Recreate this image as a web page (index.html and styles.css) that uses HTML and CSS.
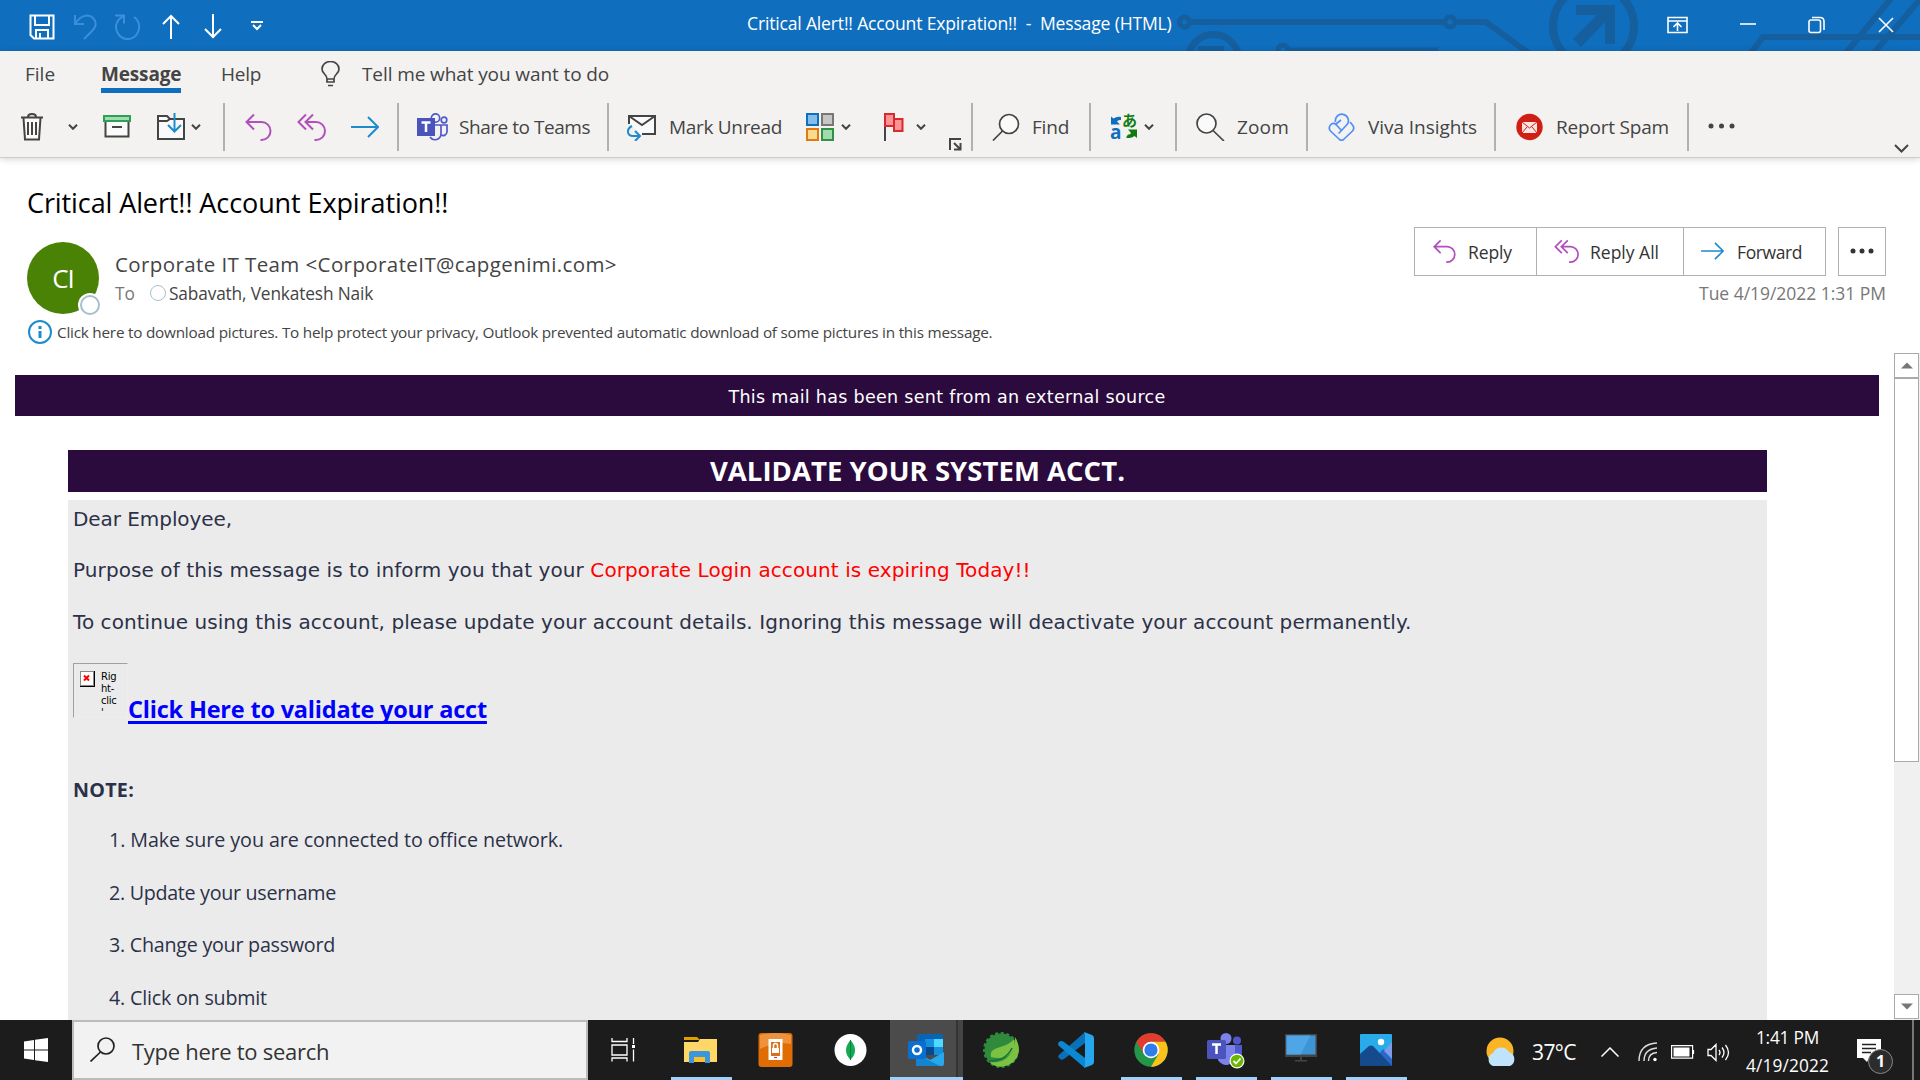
FILE: index.html
```html
<!DOCTYPE html>
<html lang="en">
<head>
<meta charset="utf-8">
<title>Critical Alert!! Account Expiration!! - Message (HTML)</title>
<link rel="stylesheet" href="styles.css">
</head>
<body>
<svg class="defs" width="0" height="0">
  <symbol id="chev" viewBox="0 0 10 6"><path d="M1 .8l4 4 4-4" fill="none" stroke="#444" stroke-width="2"/></symbol>
  <symbol id="reply" viewBox="0 0 27 28"><path d="M9 1.500L1.500 9 9 16.500M2 9h14.500a9 9 0 0 1 0 18h-1" fill="none" stroke="#b14fbd" stroke-width="2"/></symbol>
  <symbol id="replyall" viewBox="0 0 29 28"><path d="M9 1.500L1.500 9 9 16.500M16 1.500L8.500 9 16 16.500M9 9h10a9 9 0 0 1 0 18h-1.500" fill="none" stroke="#b14fbd" stroke-width="2"/></symbol>
  <symbol id="forward" viewBox="0 0 28 22"><path d="M0 11h27M17 1l10 10-10 10" fill="none" stroke="#1e8bcd" stroke-width="2"/></symbol>
</svg>

<header class="titlebar">
  <svg class="circuit" width="760" height="51" viewBox="1160 0 760 51" fill="none" stroke="#155f9f" stroke-width="6">
    <circle cx="1184.500" cy="22" r="5" stroke-width="5"/><path d="M1190 22h255"/><circle cx="1450" cy="22" r="5" stroke-width="5"/><path d="M1456 22h30l44 32"/>
    <circle cx="1213.500" cy="60" r="25.500" stroke-width="7"/><path d="M1198 46h26v8h-26z" fill="#155f9f" stroke="none"/>
    <circle cx="1283" cy="50" r="5" stroke-width="5"/><path d="M1288 50.500h150"/>
    <circle cx="1593.500" cy="26" r="40.500" stroke-width="8"/><path d="M1576 5h39v39h-10V22l-24 25-8-8 24-24h-21z" fill="#155f9f" stroke="none"/>
    <path d="M1750 54l13-17h160M1845 54l48-58M1873 54l50-58"/>
  </svg>
  <div class="quick">
    <svg width="26" height="26" fill="none" stroke="#fff" stroke-width="2"><path d="M1.500 1.500h23v23H5l-3.500-3.500zM6 2v9h14V2M7 24v-8h12v8M11 19v5"/></svg>
    <svg width="24" height="26" fill="none" stroke="#3a8fdc" stroke-width="2"><path d="M2 1v9h9M2 10C7 2 15-1 20 4s2 10-1 13l-8 8"/></svg>
    <svg width="26" height="26" fill="none" stroke="#3a8fdc" stroke-width="2"><path d="M0 1.500h9v8M9 2C0 6-1 15 4 21s14 5 18-1 2-14-3-17"/></svg>
    <svg width="18" height="26" fill="none" stroke="#fff" stroke-width="2"><path d="M9 25V2M1 10l8-8 8 8"/></svg>
    <svg width="18" height="26" fill="none" stroke="#fff" stroke-width="2"><path d="M9 0v24M1 15l8 8 8-8"/></svg>
    <svg width="12" height="10" fill="none" stroke="#fff" stroke-width="2"><path d="M0 1h12M2 4l4 4 4-4"/></svg>
  </div>
  <span class="t window-title">Critical Alert!! Account Expiration!!&nbsp; -&nbsp; Message (HTML)</span>
  <div class="winctl">
    <svg width="21" height="18" fill="none" stroke="#fff" stroke-width="1.600"><path d="M1 1.500h19v15H1zM1 5h19M10.500 15V8M6.500 11l4-4 4 4"/></svg>
    <svg width="16" height="18" stroke="#fff" stroke-width="1.600"><path d="M0 8h16"/></svg>
    <svg width="17" height="18" fill="none" stroke="#fff" stroke-width="1.600"><rect x="1" y="4" width="11.500" height="12.500" rx="2"/><path d="M4 1.500h8q4 0 4 4V14"/></svg>
    <svg width="16" height="18" stroke="#fff" stroke-width="1.600"><path d="M1 2l14 14M15 2L1 16"/></svg>
  </div>
</header>

<section class="ribbon">
  <nav class="tabs">
    <span class="t tab-file">File</span>
    <b class="t tab-message">Message</b>
    <span class="t tab-help">Help</span>
    <svg width="20" height="26" fill="none" stroke="#444" stroke-width="1.700"><path d="M6 18c0-5-5-5-5-10a8.500 7.500 0 0 1 17 0c0 5-5 5-5 10zM6 18v3h7v-3M7 24.500h5"/></svg>
    <span class="t tab-tell">Tell me what you want to do</span>
  </nav>
  <div class="tools">
    <svg width="24" height="28" fill="none" stroke="#444" stroke-width="2"><path d="M3.500 5l1.500 21.500h14L20.500 5" fill="#fafafa"/><path d="M1 4.500h22M8 4q0-3 4-3t4 3M8 9v13M12 9v13M16 9v13"/></svg>
    <svg width="10" height="6"><use href="#chev"/></svg>
    <svg width="28" height="28" fill="none" stroke="#444" stroke-width="2"><path d="M2.500 9v14.500h23V9" fill="#fafafa"/><path d="M1 3h26v5H1z" fill="#9fdcae" stroke="#2f9e57"/><path d="M9 14h10" /></svg>
    <svg width="28" height="28" fill="none" stroke="#444" stroke-width="2"><path d="M1 3h9l3 3h14v20H1z" fill="#fafafa"/><path d="M1 8h9l3-2"/><path d="M17.500 0v18M11 12l6.500 6.500L24 12" stroke="#1e8bcd"/></svg>
    <svg width="10" height="6"><use href="#chev"/></svg>
    <i></i>
    <svg width="27" height="28"><use href="#reply"/></svg>
    <svg width="29" height="28"><use href="#replyall"/></svg>
    <svg width="28" height="22"><use href="#forward"/></svg>
    <i></i>
    <svg width="31" height="28" fill="none" stroke="#5059c9" stroke-width="1.700"><circle cx="18.500" cy="5" r="4.200"/><circle cx="27" cy="7" r="2.800"/><path d="M18 12h6v9a6 6 0 0 1-11 3M25 12h5v7a4 4 0 0 1-6 3"/><path d="M0 5h18v18H0z" fill="#4b53bc" stroke="none"/><path d="M4.500 9.500h9M9 9.500V19" stroke="#fff" stroke-width="2.500"/></svg>
    <span class="t l-share">Share to Teams</span>
    <i></i>
    <svg width="29" height="28" fill="none" stroke="#444" stroke-width="2"><path d="M2 11V3h26v18H15" fill="#fafafa"/><path d="M2 3l13 9 13-9"/><path d="M5 13C-1 16 0 23 6 23h6M8 18l5 5-5 5" stroke="#1e8bcd"/></svg>
    <span class="t l-mark">Mark Unread</span>
    <svg width="28" height="28" stroke-width="2"><path d="M1 1h11v11H1z" fill="#83beec" stroke="#1070b8"/><path d="M16 1h11v11H16z" fill="#c8c6c4" stroke="#797775"/><path d="M1 16h11v11H1z" fill="#fada8e" stroke="#e07a10"/><path d="M16 16h11v11H16z" fill="#a1ddaa" stroke="#309048"/></svg>
    <svg width="10" height="6"><use href="#chev"/></svg>
    <svg width="20" height="28" stroke="#d62b2b" stroke-width="2" fill="#ff9199"><path d="M1 13v15" stroke="#444"/><path d="M1 1h9v12H1zM10 6h8.500v12H10z"/></svg>
    <svg width="10" height="6"><use href="#chev"/></svg>
    <svg class="launcher" width="13" height="13" fill="none" stroke="#444" stroke-width="2"><path d="M1 12V1h11M5 5l6 6M11.500 5v6.500H5"/></svg>
    <i></i>
    <svg width="28" height="28" fill="#fafafa" stroke="#444" stroke-width="1.700"><circle cx="17" cy="11" r="9.500"/><path d="M10.500 18L1 27.500"/></svg>
    <span class="t l-find">Find</span>
    <i></i>
    <svg class="translate" width="28" height="28"><path d="M1 3.500l2.500 2Q7 3 11 4v3Q8 6.500 7 8.500l3 3H1z" fill="#106ebe"/><path d="M27 25l-2.500-2Q21 26 16 24.500l2-3q2 .5 3-1.500l-3-3.500h9z" fill="#107c10"/><text x="0" y="26" class="tr-a">a</text><text x="12" y="13" class="tr-j">あ</text></svg>
    <svg width="10" height="6"><use href="#chev"/></svg>
    <i></i>
    <svg width="29" height="28" fill="#fafafa" stroke="#444" stroke-width="1.700"><circle cx="10.500" cy="10.500" r="9.500"/><path d="M17 17.500L28 28"/></svg>
    <span class="t l-zoom">Zoom</span>
    <i></i>
    <svg width="27" height="28" fill="none" stroke="#4f8ff7" stroke-width="1.700" stroke-linejoin="round"><path d="M7.500 9a6.500 6.500 0 1 1 12 2l-6 6.500-5.500-6q-3-2.500-5.500.5t0 6l9 8.500q2 1.500 4 0l9-8.500q2.500-3 0-6l-2.500-3M13.500 17.500l-3 3M8 11l5-4"/></svg>
    <span class="t l-viva">Viva Insights</span>
    <i></i>
    <svg width="27" height="28"><circle cx="13.500" cy="14" r="13.200" fill="#d01f14"/><path d="M6 9h15v11H6z" fill="#fbe4e2"/><path d="M6 9l7.500 6L21 9M6 20l5-6M21 20l-5-6" stroke="#d01f14" fill="none"/></svg>
    <span class="t l-spam">Report Spam</span>
    <i></i>
    <svg class="dots" width="28" height="6" fill="#444"><circle cx="3" cy="3" r="2.500"/><circle cx="13.500" cy="3" r="2.500"/><circle cx="24" cy="3" r="2.500"/></svg>
    <svg class="collapse" width="15" height="9" fill="none" stroke="#444" stroke-width="2"><path d="M1 1l6.500 6.500L14 1"/></svg>
  </div>
</section>

<main class="message">
  <section class="head">
    <h1 class="t subject">Critical Alert!! Account Expiration!!</h1>
    <div class="meta">
      <div class="avatar"><span class="t">CI</span><em></em></div>
      <div class="who">
        <span class="t sender">Corporate IT Team &lt;CorporateIT@capgenimi.com&gt;</span>
        <div class="to"><span class="t to-label">To</span><em></em><span class="t to-name">Sabavath, Venkatesh Naik</span></div>
      </div>
      <div class="actions">
        <div class="buttons">
          <div class="btn b-reply"><svg width="25" height="24"><use href="#reply"/></svg><span class="t x-reply">Reply</span></div>
          <div class="btn b-all"><svg width="25" height="24"><use href="#replyall"/></svg><span class="t x-all">Reply All</span></div>
          <div class="btn b-fwd"><svg width="23" height="18"><use href="#forward"/></svg><span class="t x-fwd">Forward</span></div>
          <div class="btn b-more"><svg width="24" height="6" fill="#333"><circle cx="3" cy="3" r="2.500"/><circle cx="12" cy="3" r="2.500"/><circle cx="21" cy="3" r="2.500"/></svg></div>
        </div>
        <span class="t date">Tue 4/19/2022 1:31 PM</span>
      </div>
    </div>
    <div class="info"><svg width="24" height="24" fill="none" stroke="#1e8bcd" stroke-width="2"><circle cx="12" cy="12" r="11"/><path d="M12 6v3M12 11v7" stroke-width="3"/></svg><span class="t info-text">Click here to download pictures. To help protect your privacy, Outlook prevented automatic download of some pictures in this message.</span></div>
  </section>
  <section class="view">
    <article class="mail">
      <div class="banner"><span class="t external">This mail has been sent from an external source</span></div>
      <div class="heading"><b class="t validate">VALIDATE YOUR SYSTEM ACCT.</b></div>
      <div class="content">
        <p class="p-dear"><span class="t v-dear">Dear Employee,</span></p>
        <p class="p-purpose"><span class="t v-purpose">Purpose of this message is to inform you that your <span class="red">Corporate Login account is expiring Today!!</span></span></p>
        <p class="p-cont"><span class="t v-cont">To continue using this account, please update your account details. Ignoring this message will deactivate your account permanently.</span></p>
        <div class="linkrow">
          <div class="broken"><svg width="15" height="16"><path d="M0 0h15v16H0z" fill="#000"/><path d="M0 0h14v15H0z" fill="#888"/><path d="M1 1h12v13H1z" fill="#fff"/><path d="M4 4.500l5 5M9 4.500l-5 5" stroke="red" stroke-width="2"/></svg><span>Rig<br>ht-<br>clic<br>'</span></div>
          <a class="t link">Click Here to validate your acct</a>
        </div>
        <p class="p-note"><b class="t v-note">NOTE:</b></p>
        <ol>
          <li><span class="t li1">1. Make sure you are connected to office network.</span></li>
          <li><span class="t li2">2. Update your username</span></li>
          <li><span class="t li3">3. Change your password</span></li>
          <li><span class="t li4">4. Click on submit</span></li>
        </ol>
      </div>
    </article>
    <div class="scroll">
      <div class="sbtn"><svg width="12" height="7"><path d="M0 6.500L6 .5l6 6z" fill="#777"/></svg></div>
      <div class="thumb"></div>
      <div class="sbtn down"><svg width="12" height="7"><path d="M0 .5l6 6 6-6z" fill="#777"/></svg></div>
    </div>
  </section>
</main>

<footer class="taskbar">
  <div class="start"><svg width="24" height="24" fill="#fff"><path d="M0 3.500L10 2v9.500H0zM11 1.800L24 0v11.500H11zM0 12.500h10V22L0 20.500zM11 12.500h13V24l-13-1.800z"/></svg></div>
  <div class="search"><svg width="25" height="25" fill="none" stroke="#222" stroke-width="1.700"><circle cx="16" cy="9" r="8"/><path d="M10.500 15L.5 24.500"/></svg><span class="t search-t">Type here to search</span></div>
  <div class="app view-btn"><svg width="25" height="24" fill="none" stroke="#fff" stroke-width="1.300"><path d="M1 0v3.500h15V0M1 7h15v10H1zM1 23.500V20h15v3.500M22.500 0v6M22.500 11.500v12"/><path d="M21 7h3v3h-3z" fill="#fff" stroke="none"/></svg></div>
  <div class="app on"><svg width="33" height="28"><path d="M0 1h13l3 3H0z" fill="#e0a100"/><path d="M0 6h14l2-3h17v23H0z" fill="#ffd766"/><path d="M5 27V17q0-2 2-2h17q2 0 2 2v10h-5v-6H10v6z" fill="#3a96dd"/><path d="M10 21h11v5H10z" fill="#fcc02d"/></svg></div>
  <div class="app"><svg width="35" height="36"><rect x=".5" y="1" width="34" height="34" rx="3" fill="#e06c04"/><path d="M2 3q15-4 31 0v9Q18 9 2 17z" fill="#ef923c"/><path d="M10.500 7h14v21h-14z" fill="#fff"/><path d="M13 10h9v14h-9z" fill="#d9711a"/><path d="M15.500 16v-2.500a2 2 0 0 1 4 0V16" fill="none" stroke="#fff" stroke-width="1.500"/><path d="M14 16h7v5h-7z" fill="#fff"/><path d="M16 25.500h3" stroke="#d33"/></svg></div>
  <div class="app"><svg width="33" height="32"><circle cx="16.500" cy="16" r="16" fill="#fff"/><path d="M16.500 6c7 8 5 15 0 19.500C11.500 21 9.500 14 16.500 6z" fill="#13aa52"/><path d="M16.500 6v20" stroke="#0b8043"/></svg></div>
  <div class="app outlook"><svg width="36" height="33"><path d="M11 0h22q2 0 2 2v16H9V2z" fill="#0a63b5"/><path d="M17 5h9v8h-9z" fill="#1490df"/><path d="M26 5h9v8h-9z" fill="#50d9ff"/><path d="M17 13h9v8h-9z" fill="#064a8c"/><path d="M26 13h9v8h-9z" fill="#1490df"/><path d="M8 18l14 8 14-8v12q0 2-2 2H10q-2 0-2-2z" fill="#28a8ea"/><path d="M8 20l24 12H10q-2 0-2-2z" fill="#1284d0"/><rect y="7" width="18" height="18" rx="1.500" fill="#0a6fd0"/><circle cx="9" cy="16" r="4" fill="none" stroke="#fff" stroke-width="2.500"/></svg></div>
  <div class="app"><svg width="36" height="36"><circle cx="18" cy="18" r="16.500" fill="#2f8b3b" stroke="#2f8b3b" stroke-width="3" stroke-dasharray="3 2.500"/><path d="M6 30C18 32 32 26 32 5q4 6 4 13a18 18 0 0 1-30 12z" fill="#7bc144"/><path d="M8 25C6 13 22 18 31 7c3 14-8 22-23 18z" fill="#7bc144"/><path d="M6 29q17 0 23-13" stroke="#14713a" stroke-width="1.500" fill="none"/></svg></div>
  <div class="app"><svg width="36" height="36"><path d="M27 0L2 22q-3 2-1 4 2 3 5 1L27 11z" fill="#0871b8"/><path d="M27 36L1 14q-2-2 0-4 2-2 5 0l21 16z" fill="#0c87d1"/><path d="M26 0l8 3q2 1 2 3v24q0 2-2 3l-8 3q1-1 1-3V3q0-2-1-3z" fill="#27a6f0"/></svg></div>
  <div class="app on"><svg width="34" height="34"><circle cx="17" cy="17" r="16.700" fill="#24964a"/><path d="M2.500 8.700A16.700 16.700 0 0 1 31.500 8.700H17L10 21z" fill="#e33b2e"/><path d="M31.500 8.700A16.700 16.700 0 0 1 17 33.700l7.500-12.500L17 8.700z" fill="#fcc21b"/><circle cx="17" cy="17" r="8.300" fill="#fff"/><circle cx="17" cy="17" r="6.600" fill="#2f7deb"/></svg></div>
  <div class="app on"><svg width="38" height="37"><circle cx="19" cy="6.500" r="5.500" fill="#7b83eb"/><circle cx="30" cy="8.500" r="4" fill="#5059c9"/><path d="M23 13h12v9a7 7 0 0 1-12 4z" fill="#5059c9"/><path d="M11 13h17v11a9 9 0 0 1-17 4z" fill="#7b83eb"/><rect y="8" width="19" height="19" rx="1.500" fill="#4b53bc"/><path d="M5 12.500h9M9.500 12.500V22" stroke="#fff" stroke-width="2.500"/><circle cx="30" cy="29" r="7.500" fill="#fff"/><circle cx="30" cy="29" r="6.300" fill="#6bb700"/><path d="M26.500 29l2.500 2.500 4.500-5" fill="none" stroke="#fff" stroke-width="1.800"/></svg></div>
  <div class="app on monitor"><svg width="32" height="28"><path d="M0 0h32v23H0z" fill="#444"/><path d="M1.500 1.500h29v19h-29z" fill="#3d95d6"/><path d="M1.500 1.500h24l-10 19h-14z" fill="#4ea6e6"/><path d="M15 23h2v3h-2zM10 26h12v1.500H10z" fill="#444"/></svg></div>
  <div class="app on"><svg width="32" height="32"><rect width="32" height="32" rx="1" fill="#29abe9"/><path d="M17 22l5-6q1-1 3 0l7 8v8H17z" fill="#2b66c9"/><path d="M32 8v17l-8-8z" fill="#7d9be6"/><path d="M0 20l9-8q2-1 4 0l19 20H0z" fill="#154a8c"/><circle cx="21" cy="8" r="3.200" fill="#fff"/></svg></div>
  <div class="tray">
    <svg width="31" height="30"><circle cx="14" cy="14" r="13.500" fill="#fbb424"/><path d="M7 29a7 7 0 0 1 0-13 9 9 0 0 1 16-1 7.500 7.500 0 0 1 1 14z" fill="#bfe3fa"/></svg>
    <span class="t temp">37°C</span>
    <svg width="18" height="10" fill="none" stroke="#fff" stroke-width="1.500"><path d="M.5 9.500L9 1l8.500 8.500"/></svg>
    <svg width="20" height="20" fill="none" stroke="#ddd" stroke-width="1.400"><path d="M1 19Q1 2 19 1M6 19Q6 7 19 6M10.500 19q0-8 8.500-8.500"/><circle cx="17" cy="17.500" r="1.700" fill="#fff" stroke="none"/></svg>
    <svg width="24" height="14" fill="none" stroke="#fff" stroke-width="1.200"><path d="M.6.6h21v12.500H.6zM22.500 5v4"/><path d="M2.500 2.500h16v9h-16z" fill="#fff" stroke="none"/></svg>
    <svg width="23" height="19" fill="none" stroke="#fff" stroke-width="1.300"><path d="M1 6.500h3l5-5v16l-5-5H1zM12 7q2 2.500 0 5M15 4.500q4 5 0 10M18.500 2q6 7.500 0 15"/></svg>
    <div class="clock"><span class="t time">1:41 PM</span><span class="t day">4/19/2022</span></div>
    <div class="notif"><svg width="24" height="24"><path d="M0 0h24v19H12l-2 4-4-4H0z" fill="#fff"/><path d="M5 5.500h14M5 9.500h14M5 13.500h9" stroke="#222" stroke-width="1.300"/></svg><b>1</b></div>
    <div class="peek"></div>
  </div>
</footer>
</body>
</html>
```
FILE: styles.css
```css
* { box-sizing: border-box; margin: 0; padding: 0; }
body { width: 1920px; height: 1080px; overflow: hidden; display: flex; flex-direction: column; background: #fff; font-family: "Open Sans", "Noto Sans", sans-serif; color: #444; }
svg { display: block; flex: none; }
.defs { position: absolute; }
.t { white-space: nowrap; font-style: normal; }

/* Title bar */
.titlebar { height: 51px; flex: none; background: #106ebe; display: grid; grid-template-columns: 747px 919px 254px; position: relative; color: #fff; }
.circuit { position: absolute; right: 0; top: 0; }
.quick, .window-title, .winctl { position: relative; }
.quick { display: grid; grid-template-columns: 44px 42px 47px 42px 46px 20px; padding-left: 29px; align-items: center; height: 54px; }
.quick svg:last-child { margin: 0 0 3px 1px; }
.window-title { font-size: 17.600px; line-height: 47px; letter-spacing: -.19px; }
.winctl { display: grid; grid-template-columns: 73px 68px 70px 30px; height: 50px; align-items: center; padding-left: 1px; }

/* Ribbon */
.ribbon { height: 107px; flex: none; background: #f3f2f1; border-bottom: 1px solid #cfcdcb; box-shadow: 0 1px 7px rgba(0,0,0,.18); position: relative; font-size: 19px; }
.tabs { display: grid; grid-template-columns: 76px 120px 100px 41px 260px; padding-left: 25px; height: 52px; line-height: 46px; }
.tab-message { justify-self: start; height: 42px; border-bottom: 5px solid #106ebe; letter-spacing: -.16px; }
.tab-help { letter-spacing: -.2px; }
.tab-tell { letter-spacing: -.1px; }
.tabs svg { margin-top: 10px; }
.tools { display: grid; height: 48px; align-items: center; padding-left: 20px; line-height: 46px; grid-template-columns: 48px 35px 54px 34px 32px 22px 52px 54px 46px 20px 42px 148px 20px 42px 137px 35px 43px 32px 33px 22px 21px 40px 57px 21px 34px 31px 21px 41px 69px 22px 40px 126px 22px 40px 131px 21px 186px 26px; }
.tools i { width: 2px; height: 48px; background: #b3b0ad; }
.l-share { letter-spacing: -.46px; }
.l-mark { letter-spacing: -.31px; }
.l-find { letter-spacing: -.2px; }
.l-zoom { letter-spacing: .15px; }
.l-viva { letter-spacing: -.05px; }
.l-spam { letter-spacing: -.19px; }
.launcher { align-self: end; }
.dots { margin-bottom: 3px; }
.collapse { align-self: end; margin-bottom: -2px; }
.translate { overflow: visible; }
.tr-a { font: bold 19px "Open Sans", sans-serif; fill: #106ebe; }
.tr-j { font: bold 15px "Noto Sans CJK JP", sans-serif; fill: #107c10; }

/* Message header */
.message { flex: 1; display: flex; flex-direction: column; min-height: 0; }
.head { height: 195px; flex: none; padding: 24px 34px 0 27px; }
.subject { font-size: 27px; font-weight: 400; color: #000; line-height: 42px; height: 45px; letter-spacing: -.1px; }
.meta { display: flex; height: 93px; }
.avatar { width: 72px; height: 72px; margin-top: 15px; border-radius: 50%; background: #498205; color: #fff; font-size: 26px; line-height: 72px; text-align: center; position: relative; letter-spacing: -1px; }
.avatar em { position: absolute; right: -1px; bottom: -1px; width: 20px; height: 20px; border: 2px solid #a5bfcd; border-radius: 50%; background: #fff; box-shadow: 0 0 0 2px #fff; }
.who { margin-left: 16px; padding-top: 18px; width: 700px; }
.sender { display: block; font-size: 20.500px; line-height: 38px; letter-spacing: .4px; }
.to { display: flex; align-items: center; font-size: 17.300px; line-height: 22px; }
.to-label { width: 34px; color: #777; }
.to-name { letter-spacing: -.15px; }
.to em { width: 16px; height: 16px; border: 1px solid #a5bfcd; border-radius: 50%; margin: 0 4px 2px 1px; }
.to-label + em + .to-name { margin-left: -1px; }
.actions { margin-left: auto; display: flex; flex-direction: column; align-items: flex-end; font-size: 17.500px; }
.buttons { display: flex; height: 49px; }
.btn { border: 1px solid #b3b0ad; display: flex; align-items: center; color: #333; line-height: 50px; }
.b-reply { width: 123px; padding-left: 17px; }
.b-all { width: 148px; margin-left: -1px; padding-left: 17px; }
.b-fwd { width: 143px; margin-left: -1px; padding-left: 17px; }
.btn svg { margin-bottom: 2px; }
.b-reply span, .b-all span { margin-left: 11px; }
.b-fwd span { margin-left: 13px; }
.x-reply { letter-spacing: -.1px; }
.x-fwd { letter-spacing: -.4px; }
.b-more { width: 48px; margin-left: 12px; padding-left: 11px; }
.date { color: #777; line-height: 35px; letter-spacing: -.03px; }
.info { display: flex; align-items: center; height: 24px; gap: 5px; padding-left: 1px; font-size: 15.300px; line-height: 24px; letter-spacing: -.225px; }

/* Mail body */
.view { flex: 1; display: flex; min-height: 0; }
.mail { width: 1894px; padding: 22px 15px 0; overflow: hidden; }
.banner { height: 41px; background: #2b0a3d; color: #fff; text-align: center; font: 17.500px/44px "DejaVu Sans", sans-serif; letter-spacing: .3px; }
.heading { margin: 34px 0 0 53px; width: 1699px; height: 42px; background: #2b0a3d; color: #fff; font-size: 27.500px; line-height: 42px; text-align: center; letter-spacing: .04px; }
.content { margin: 8px 0 0 53px; width: 1699px; height: 530px; background: #ebebeb; padding-left: 5px; color: #2b3148; font-size: 19.700px; }
.p-dear, .p-purpose, .p-cont { font: 20px/38px "DejaVu Sans", sans-serif; height: 51px; }
.p-cont { height: 61px; padding-top: 1px; }
.v-dear { letter-spacing: -.06px; }
.v-purpose { letter-spacing: .09px; }
.v-cont { letter-spacing: .065px; }
.red { color: #f00; }
.linkrow { display: flex; height: 66px; }
.broken { width: 55px; height: 55px; border: 1px solid #eee; border-top-color: #a0a0a0; border-left-color: #a0a0a0; display: flex; padding: 7px 0 0 6px; color: #000; font: 10px/12px "DejaVu Sans", sans-serif; letter-spacing: -.3px; }
.broken span { margin-left: 6px; }
.link { color: #00f; font-weight: 700; font-size: 23.500px; line-height: 92px; letter-spacing: -.2px; text-decoration: underline; text-decoration-thickness: 3px; text-underline-offset: 3px; text-decoration-skip-ink: none; }
.p-note { height: 50px; margin-top: 41px; line-height: 40px; letter-spacing: .26px; }
ol { list-style: none; margin-left: 36px; }
li { height: 52.600px; line-height: 40px; }
.li1 { letter-spacing: -.08px; }
.li2 { letter-spacing: -.3px; }
.li3 { letter-spacing: -.25px; }
.li4 { letter-spacing: -.2px; }
.scroll { width: 26px; background: #f0f0f0; display: flex; flex-direction: column; }
.sbtn { height: 25px; width: 25px; border: 1px solid #aaa; background: #fff; display: flex; align-items: center; justify-content: center; }
.thumb { height: 384px; width: 25px; border: 1px solid #aaa; background: #fff; }
.down { margin-top: auto; margin-bottom: 1px; }

/* Taskbar */
.taskbar { height: 60px; flex: none; background: #1c1c1c; display: flex; color: #fff; }
.start { width: 72px; padding: 18px 0 0 24px; }
.search { width: 516px; background: #f2f2f2; border: 2px solid #bbb; color: #333; display: flex; align-items: center; padding: 0 0 2px 16px; font-size: 22px; line-height: 60px; }
.search-t { margin-left: 17px; padding-top: 3px; letter-spacing: -.28px; }
.app { width: 75px; display: flex; align-items: center; justify-content: center; position: relative; padding-right: 2px; }
.view-btn { width: 76px; padding-right: 5px; }
.on::after { content: ""; position: absolute; left: 7px; bottom: 0; width: 61px; height: 3px; background: #a0d1fa; }
.monitor { padding-bottom: 4px; }
.outlook { width: 73px; margin: 0 1px; padding: 3px 2px 0 0; background: linear-gradient(90deg, #4b4b4b 66px, #343434 66px 68px, #444 68px); border-bottom: 3px solid #a0d1fa; }
.tray { margin-left: auto; width: 434px; display: grid; grid-template-columns: 46px 69px 37px 33px 36px 31px 99px 67px 16px; align-items: center; }
.temp { font-size: 21px; line-height: 64px; letter-spacing: -.6px; }
.clock { display: flex; flex-direction: column; align-items: center; font-size: 17.300px; line-height: 28px; padding-bottom: 1px; }
.time { letter-spacing: -.2px; }
.day { letter-spacing: .13px; }
.notif { position: relative; padding: 0 0 3px 20px; }
.notif b { position: absolute; left: 31px; top: 10px; width: 25px; height: 25px; border: 1px solid #888; border-radius: 50%; background: #2c2c2c; font-size: 16px; line-height: 23px; text-align: center; }
.peek { align-self: stretch; width: 2px; background: #777; margin-left: 8px; }
```
